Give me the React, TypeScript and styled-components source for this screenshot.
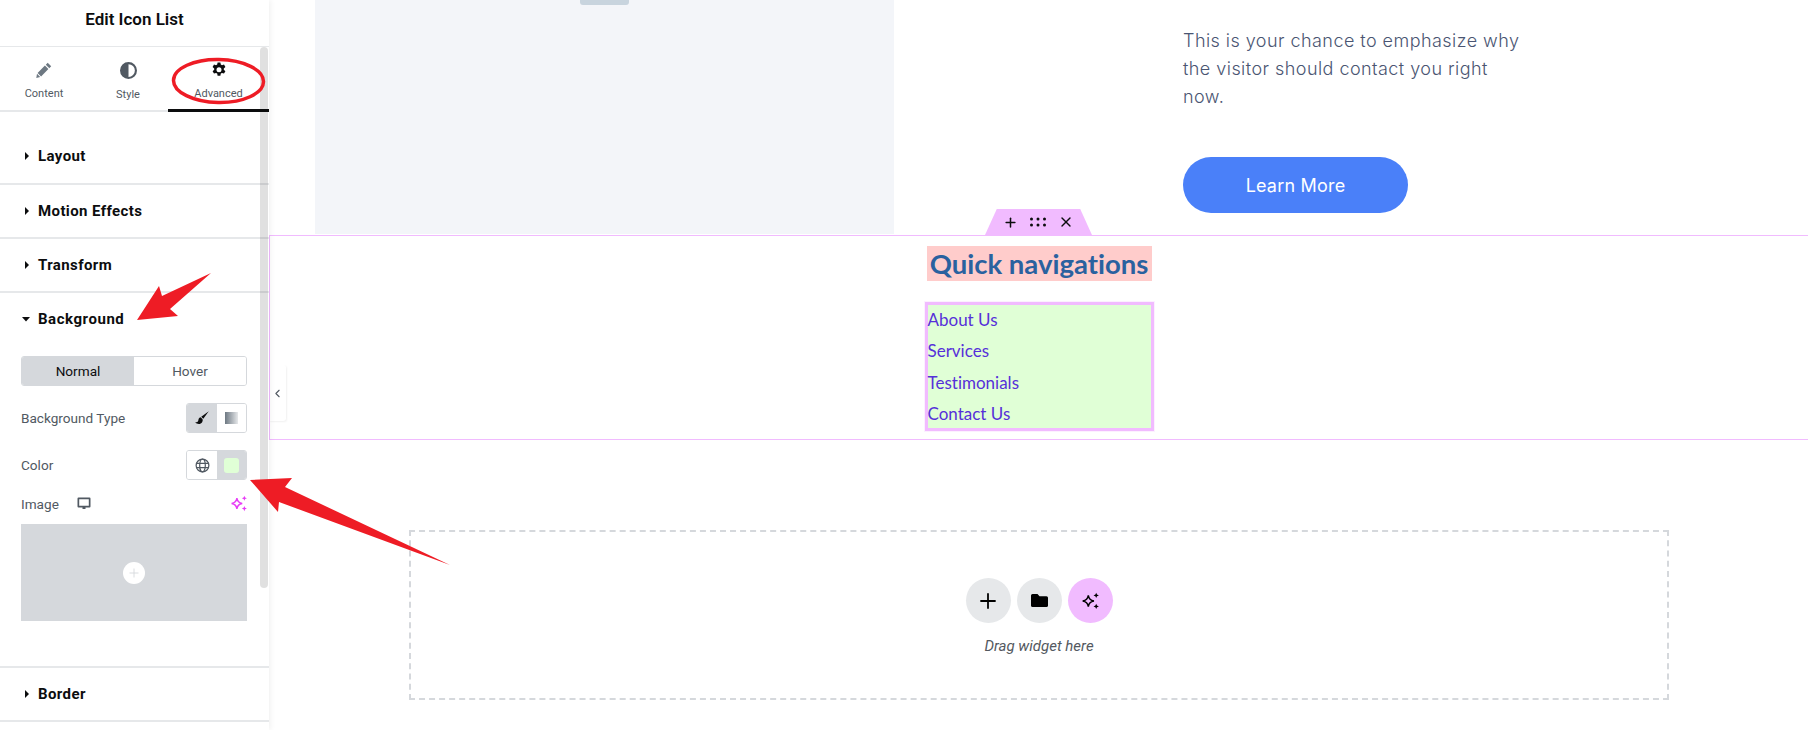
import React from 'react';
import styled, { createGlobalStyle } from 'styled-components';
import { ChevronLeft, Plus, X } from 'lucide-react';

const GlobalStyle = createGlobalStyle`
  html, body {
    margin: 0;
    padding: 0;
    width: 1808px;
    height: 730px;
    overflow: hidden;
    background: #fff;
    font-family: Roboto, "Liberation Sans", sans-serif;
  }
  * { box-sizing: border-box; }
`;

const Page = styled.div`
  position: relative;
  display: flex;
  width: 1808px;
  height: 730px;
  overflow: hidden;
  background: #fff;
`;

const Panel = styled.aside`
  position: relative;
  flex: 0 0 269px;
  min-width: 0;
  height: 730px;
  display: flex;
  flex-direction: column;
  background: #fff;
  box-shadow: 1px 0 6px rgba(0, 0, 0, 0.07);
  z-index: 2;
`;

const PanelHeader = styled.header`
  flex: 0 0 47px;
  display: flex;
  align-items: center;
  justify-content: center;
  padding-bottom: 8px;
  border-bottom: 1px solid #e6e8ea;
  font-size: 17px;
  font-weight: 600;
  color: #0c0d0e;
`;

const Tabs = styled.nav`
  flex: 0 0 65px;
  display: grid;
  grid-template-columns: 88px 80px 101px;
  border-bottom: 2px solid #e6e8ea;
`;

const Tab = styled.div<{ $active?: boolean }>`
  position: relative;
  display: flex;
  flex-direction: column;
  align-items: center;
  padding-top: 15px;
  gap: 9px;
  font-size: 11px;
  line-height: 13px;
  color: #515962;
  svg {
    color: ${(p) => (p.$active ? '#0c0d0e' : '#515962')};
  }
  ${(p) =>
    p.$active &&
    `
    margin-bottom: -2px;
    border-bottom: 3px solid #0c0d0e;
  `}
`;

const SectionRow = styled.div<{ $height: number; $offset?: number }>`
  flex: 0 0 ${(p) => p.$height}px;
  display: flex;
  align-items: center;
  gap: 7px;
  padding-left: 23px;
  padding-top: ${(p) => p.$offset || 0}px;
  border-bottom: 2px solid #e6e8ea;
  font-size: 15px;
  font-weight: 700;
  letter-spacing: 0.4px;
  color: #0c0d0e;
`;

const BackgroundBlock = styled.section`
  flex: 0 0 375px;
  display: flex;
  flex-direction: column;
  padding: 16px 22px 0 21px;
  border-bottom: 2px solid #e6e8ea;
`;

const BackgroundTitle = styled.div`
  display: flex;
  align-items: center;
  gap: 8px;
  padding-left: 1px;
  height: 20px;
  font-size: 15px;
  font-weight: 700;
  letter-spacing: 0.55px;
  color: #0c0d0e;
`;

const Switcher = styled.div`
  display: grid;
  grid-template-columns: 1fr 1fr;
  height: 30px;
  margin-top: 27px;
  border: 1px solid #d5d8dc;
  border-radius: 3px;
  overflow: hidden;
`;

const SwitchOption = styled.div<{ $active?: boolean }>`
  display: flex;
  align-items: center;
  justify-content: center;
  background: ${(p) => (p.$active ? '#d5d8dc' : '#fff')};
  color: ${(p) => (p.$active ? '#0c0d0e' : '#515962')};
  font-size: 13.6px;
`;

const ControlRow = styled.div<{ $top: number }>`
  display: flex;
  align-items: center;
  justify-content: space-between;
  margin-top: ${(p) => p.$top}px;
  font-size: 13.6px;
  color: #515962;
`;

const Chooser = styled.div`
  display: grid;
  grid-template-columns: 30px 1fr;
  width: 61px;
  height: 30px;
  border: 1px solid #d5d8dc;
  border-radius: 3px;
  overflow: hidden;
`;

const ChooserCell = styled.div<{ $active?: boolean }>`
  display: flex;
  align-items: center;
  justify-content: center;
  background: ${(p) => (p.$active ? '#d5d8dc' : '#fff')};
`;

const GradientSwatch = styled.div`
  width: 13px;
  height: 12px;
  background: linear-gradient(90deg, #6d7882, #e6e8ea);
`;

const ColorSwatch = styled.div`
  width: 15px;
  height: 15px;
  border-radius: 3px;
  background: #e0ffd6;
`;

const ImageLabel = styled.div`
  display: flex;
  align-items: center;
  gap: 18px;
`;

const ImageDrop = styled.div`
  display: flex;
  align-items: center;
  justify-content: center;
  height: 97px;
  margin-top: 12px;
  background: #d5d8dc;
`;

const ImagePlus = styled.div`
  width: 22px;
  height: 22px;
  display: flex;
  align-items: center;
  justify-content: center;
  border-radius: 50%;
  background: #fff;
  color: #d5d8dc;
`;

const Scrollbar = styled.div`
  position: absolute;
  top: 47px;
  right: 1px;
  width: 8px;
  height: 541px;
  border-radius: 4px;
  background: rgba(0, 0, 0, 0.12);
`;

const CollapseTab = styled.div`
  position: absolute;
  top: 365px;
  left: 269px;
  width: 17px;
  height: 56px;
  display: flex;
  align-items: center;
  justify-content: center;
  background: #fff;
  border-radius: 0 3px 3px 0;
  box-shadow: 1px 1px 2px rgba(0, 0, 0, 0.06);
  color: #515962;
`;

const Canvas = styled.main`
  flex: 1;
  display: flex;
  flex-direction: column;
  min-width: 0;
`;

const Hero = styled.div`
  flex: 0 0 235px;
  display: flex;
  padding-left: 46px;
`;

const HeroImage = styled.div`
  flex: 0 0 579px;
  height: 234px;
  display: flex;
  justify-content: center;
  background: #f3f5f9;
`;

const ImageHandle = styled.div`
  width: 49px;
  height: 5px;
  margin-left: -1px;
  border-radius: 0 0 3px 3px;
  background: #c8d4de;
`;

const HeroText = styled.div`
  display: flex;
  flex-direction: column;
  align-items: flex-start;
  margin-left: 289px;
  padding-top: 27px;
`;

const HeroParagraph = styled.p`
  width: 345px;
  margin: 0;
  font-family: Inter, "Open Sans", sans-serif;
  font-size: 18px;
  font-weight: 300;
  letter-spacing: 0.45px;
  line-height: 28px;
  color: #4a5572;
`;

const LearnMore = styled.a`
  display: flex;
  align-items: center;
  justify-content: center;
  width: 225px;
  height: 56px;
  margin-top: 46px;
  border-radius: 28px;
  background: #4a80f9;
  font-family: Inter, "Open Sans", sans-serif;
  font-size: 18px;
  font-weight: 400;
  letter-spacing: 0.2px;
  color: #fff;
`;

const NavSection = styled.section`
  position: relative;
  flex: 0 0 205px;
  display: flex;
  flex-direction: column;
  align-items: center;
  padding-top: 10px;
  border: 1px solid #f1bbff;
  border-right: 0;
`;

const SectionHandle = styled.div`
  position: absolute;
  top: -27px;
  left: 715px;
  width: 107px;
  height: 26px;
  display: flex;
  align-items: center;
  justify-content: center;
  gap: 12px;
  color: #0c0d0e;
  background: #f1bbff;
  clip-path: polygon(11% 0, 89% 0, 100% 100%, 0 100%);
  border-radius: 3px 3px 0 0;
`;

const NavTitle = styled.h2`
  width: 225px;
  height: 35px;
  margin: 0;
  display: flex;
  align-items: center;
  justify-content: center;
  background: #ffcccb;
  font-family: Lato, "Open Sans", sans-serif;
  font-size: 27.5px;
  font-weight: 700;
  font-variant-ligatures: none;
  color: #2a619f;
`;

const NavList = styled.ul`
  width: 229px;
  height: 129px;
  margin: 21px 0 0;
  padding: 0;
  list-style: none;
  background: #e0ffd6;
  border: 3px solid #f1bbff;
  outline: 1px solid #fcf0ff;
`;

const NavItem = styled.li`
  height: 31.25px;
  font-family: Lato, "Open Sans", sans-serif;
  font-size: 17px;
  font-variant-ligatures: none;
  line-height: 29px;
  color: #5630d9;
`;

const DropWrap = styled.div`
  padding: 90px 0 0 140px;
`;

const DropZone = styled.div`
  width: 1260px;
  height: 170px;
  display: flex;
  flex-direction: column;
  align-items: center;
  padding-top: 46px;
  border: 2px dashed #d5d8dc;
`;

const DropButtons = styled.div`
  display: flex;
  gap: 6px;
`;

const RoundButton = styled.div<{ $pink?: boolean }>`
  width: 45px;
  height: 45px;
  display: flex;
  align-items: center;
  justify-content: center;
  border-radius: 50%;
  color: #000;
  background: ${(p) => (p.$pink ? '#f1bbff' : '#e6e8ea')};
`;

const DropHint = styled.div`
  margin-top: 14px;
  font-size: 15px;
  font-style: italic;
  color: #54595f;
`;

const Annotations = styled.svg`
  position: absolute;
  top: 0;
  left: 0;
  width: 1808px;
  height: 730px;
  pointer-events: none;
  z-index: 5;
`;

const Caret = ({ open }: { open?: boolean }) => (
  <svg width="8" height="8" viewBox="0 0 8 8" fill="#0c0d0e" style={{ flex: 'none' }}>
    {open ? <path d="M0 2h8L4 6.5z" /> : <path d="M2 0l4 4-4 4z" />}
  </svg>
);

const Sparkle = ({ size, color }: { size: number; color: string }) => (
  <svg width={size} height={size} viewBox="0 0 16 16" fill="none" stroke={color} strokeWidth="1.3">
    <path d="M6.5 3c.5 3.2 1.800 4.500 5 5-3.200.5-4.500 1.800-5 5-.5-3.200-1.800-4.500-5-5 3.200-.5 4.500-1.800 5-5z" />
    <path
      fill={color}
      stroke="none"
      d="M13.500.6l.7 1.700 1.700.7-1.700.7-.7 1.700-.7-1.700-1.700-.7 1.700-.7zM13.500 10.400l.7 1.700 1.700.7-1.700.7-.7 1.700-.7-1.700-1.700-.7 1.700-.7z"
    />
  </svg>
);

const Pencil = () => (
  <svg width="16" height="16" viewBox="0 0 16 16" fill="#6d7882">
    <path d="M11.700.8l3.500 3.500-1.900 1.900-3.500-3.500zM8.900 3.600l3.500 3.500-7.300 7.300-3.500-3.500zM1 11.800l3.200 3.200-3.900 1z" />
  </svg>
);

const HalfCircle = () => (
  <svg width="17" height="17" viewBox="0 0 16 16">
    <circle cx="8" cy="8" r="7" fill="#fff" stroke="currentColor" strokeWidth="2" />
    <path d="M8 1a7 7 0 0 0 0 14z" fill="currentColor" />
  </svg>
);

const Gear = () => (
  <svg width="16" height="16" viewBox="0 0 16 16">
    <path
      fill="currentColor"
      fillRule="evenodd"
      d="M6.600.5h2.800l.4 2.100 1.200.7 2-.7 1.400 2.400-1.600 1.400v1.400l1.600 1.400-1.400 2.400-2-.7-1.200.7-.4 2.100H6.600l-.4-2.100-1.200-.7-2 .7-1.400-2.400 1.600-1.400V6.400L1.600 5l1.400-2.400 2 .7 1.200-.7zM8 5.300a2.500 2.500 0 1 0 0 5 2.500 2.500 0 0 0 0-5z"
    />
  </svg>
);

const Brush = () => (
  <svg width="14" height="14" viewBox="0 0 13 13" fill="#0c0d0e">
    <path d="M12.800.3L5.800 5.300l1.900 2zM5.200 5.900C3.400 6.100 3.400 7.800 3 9c-.3.900-1.200 1.400-2.800 1.500 1.400 1.900 5.100 2.200 6.400-.1.700-1.200.7-2.100.3-2.900z" />
  </svg>
);

const Globe = () => (
  <svg width="15" height="15" viewBox="0 0 16 16" fill="none" stroke="#515962" strokeWidth="1.300">
    <circle cx="8" cy="8" r="6.800" />
    <ellipse cx="8" cy="8" rx="3" ry="6.800" />
    <path d="M1.500 5.700h13M1.500 10.300h13" />
  </svg>
);

const Monitor = () => (
  <svg width="14" height="13" viewBox="0 0 14 13" fill="#515962">
    <path
      fillRule="evenodd"
      d="M1.500 .5h11A1 1 0 0 1 13.500 1.500v8a1 1 0 0 1-1 1h-4v1.500H5.500v-1.500h-4a1 1 0 0 1-1-1v-8a1 1 0 0 1 1-1zM2.200 2.200v6.600h9.600V2.200z"
    />
  </svg>
);

const Dots = () => (
  <svg width="16" height="10" viewBox="0 0 16 10" fill="#0c0d0e">
    {[1.5, 8, 14.5].map((x) =>
      [2, 8].map((y) => <circle key={`${x}-${y}`} cx={x} cy={y} r="1.500" />),
    )}
  </svg>
);

const Folder = () => (
  <svg width="17" height="15" viewBox="0 0 17 15" fill="#000">
    <path d="M1.500 1h5l2 2.200h7a1.500 1.500 0 0 1 1.500 1.500v8A1.500 1.500 0 0 1 15.500 14h-14A1.500 1.500 0 0 1 0 12.700V2.500A1.500 1.500 0 0 1 1.500 1z" />
  </svg>
);

const App: React.FC = () => {
  return (
    <Page>
      <GlobalStyle />
      <Panel>
        <PanelHeader>Edit Icon List</PanelHeader>
        <Tabs>
          <Tab>
            <Pencil />
            Content
          </Tab>
          <Tab>
            <HalfCircle />
            Style
          </Tab>
          <Tab $active>
            <Gear />
            Advanced
          </Tab>
        </Tabs>
        <SectionRow $height={73} $offset={16}>
          <Caret />
          Layout
        </SectionRow>
        <SectionRow $height={54}>
          <Caret />
          Motion Effects
        </SectionRow>
        <SectionRow $height={54}>
          <Caret />
          Transform
        </SectionRow>
        <BackgroundBlock>
          <BackgroundTitle>
            <Caret open />
            Background
          </BackgroundTitle>
          <Switcher>
            <SwitchOption $active>Normal</SwitchOption>
            <SwitchOption>Hover</SwitchOption>
          </Switcher>
          <ControlRow $top={17}>
            Background Type
            <Chooser>
              <ChooserCell $active>
                <Brush />
              </ChooserCell>
              <ChooserCell>
                <GradientSwatch />
              </ChooserCell>
            </Chooser>
          </ControlRow>
          <ControlRow $top={17}>
            Color
            <Chooser>
              <ChooserCell>
                <Globe />
              </ChooserCell>
              <ChooserCell $active>
                <ColorSwatch />
              </ChooserCell>
            </Chooser>
          </ControlRow>
          <ControlRow $top={15}>
            <ImageLabel>
              Image
              <Monitor />
            </ImageLabel>
            <Sparkle size={17} color="#e73cf6" />
          </ControlRow>
          <ImageDrop>
            <ImagePlus>
              <Plus size={14} strokeWidth={1.5} />
            </ImagePlus>
          </ImageDrop>
        </BackgroundBlock>
        <SectionRow $height={54}>
          <Caret />
          Border
        </SectionRow>
        <Scrollbar />
      </Panel>
      <CollapseTab>
        <ChevronLeft size={13} strokeWidth={2} />
      </CollapseTab>
      <Canvas>
        <Hero>
          <HeroImage>
            <ImageHandle />
          </HeroImage>
          <HeroText>
            <HeroParagraph>
              This is your chance to emphasize why the visitor should contact you right now.
            </HeroParagraph>
            <LearnMore>Learn More</LearnMore>
          </HeroText>
        </Hero>
        <NavSection>
          <SectionHandle>
            <Plus size={15} strokeWidth={2.4} />
            <Dots />
            <X size={16} strokeWidth={2} />
          </SectionHandle>
          <NavTitle>Quick navigations</NavTitle>
          <NavList>
            <NavItem>About Us</NavItem>
            <NavItem>Services</NavItem>
            <NavItem>Testimonials</NavItem>
            <NavItem>Contact Us</NavItem>
          </NavList>
        </NavSection>
        <DropWrap>
          <DropZone>
            <DropButtons>
              <RoundButton>
                <Plus size={24} strokeWidth={1.8} />
              </RoundButton>
              <RoundButton>
                <Folder />
              </RoundButton>
              <RoundButton $pink>
                <Sparkle size={18} color="#000" />
              </RoundButton>
            </DropButtons>
            <DropHint>Drag widget here</DropHint>
          </DropZone>
        </DropWrap>
      </Canvas>
      <Annotations viewBox="0 0 1808 730">
        <ellipse cx="218.500" cy="81" rx="45" ry="21.500" fill="none" stroke="#ee1c25" strokeWidth="3.500" transform="rotate(1 218 81)" />
        <polygon fill="#ee1c25" points="137,320 159,286 162,296 211,273 170,309 178,316" />
        <polygon fill="#ee1c25" points="250,480 292,478 285,487 450,565 279,502 278,512" />
      </Annotations>
    </Page>
  );
};

export default App;
